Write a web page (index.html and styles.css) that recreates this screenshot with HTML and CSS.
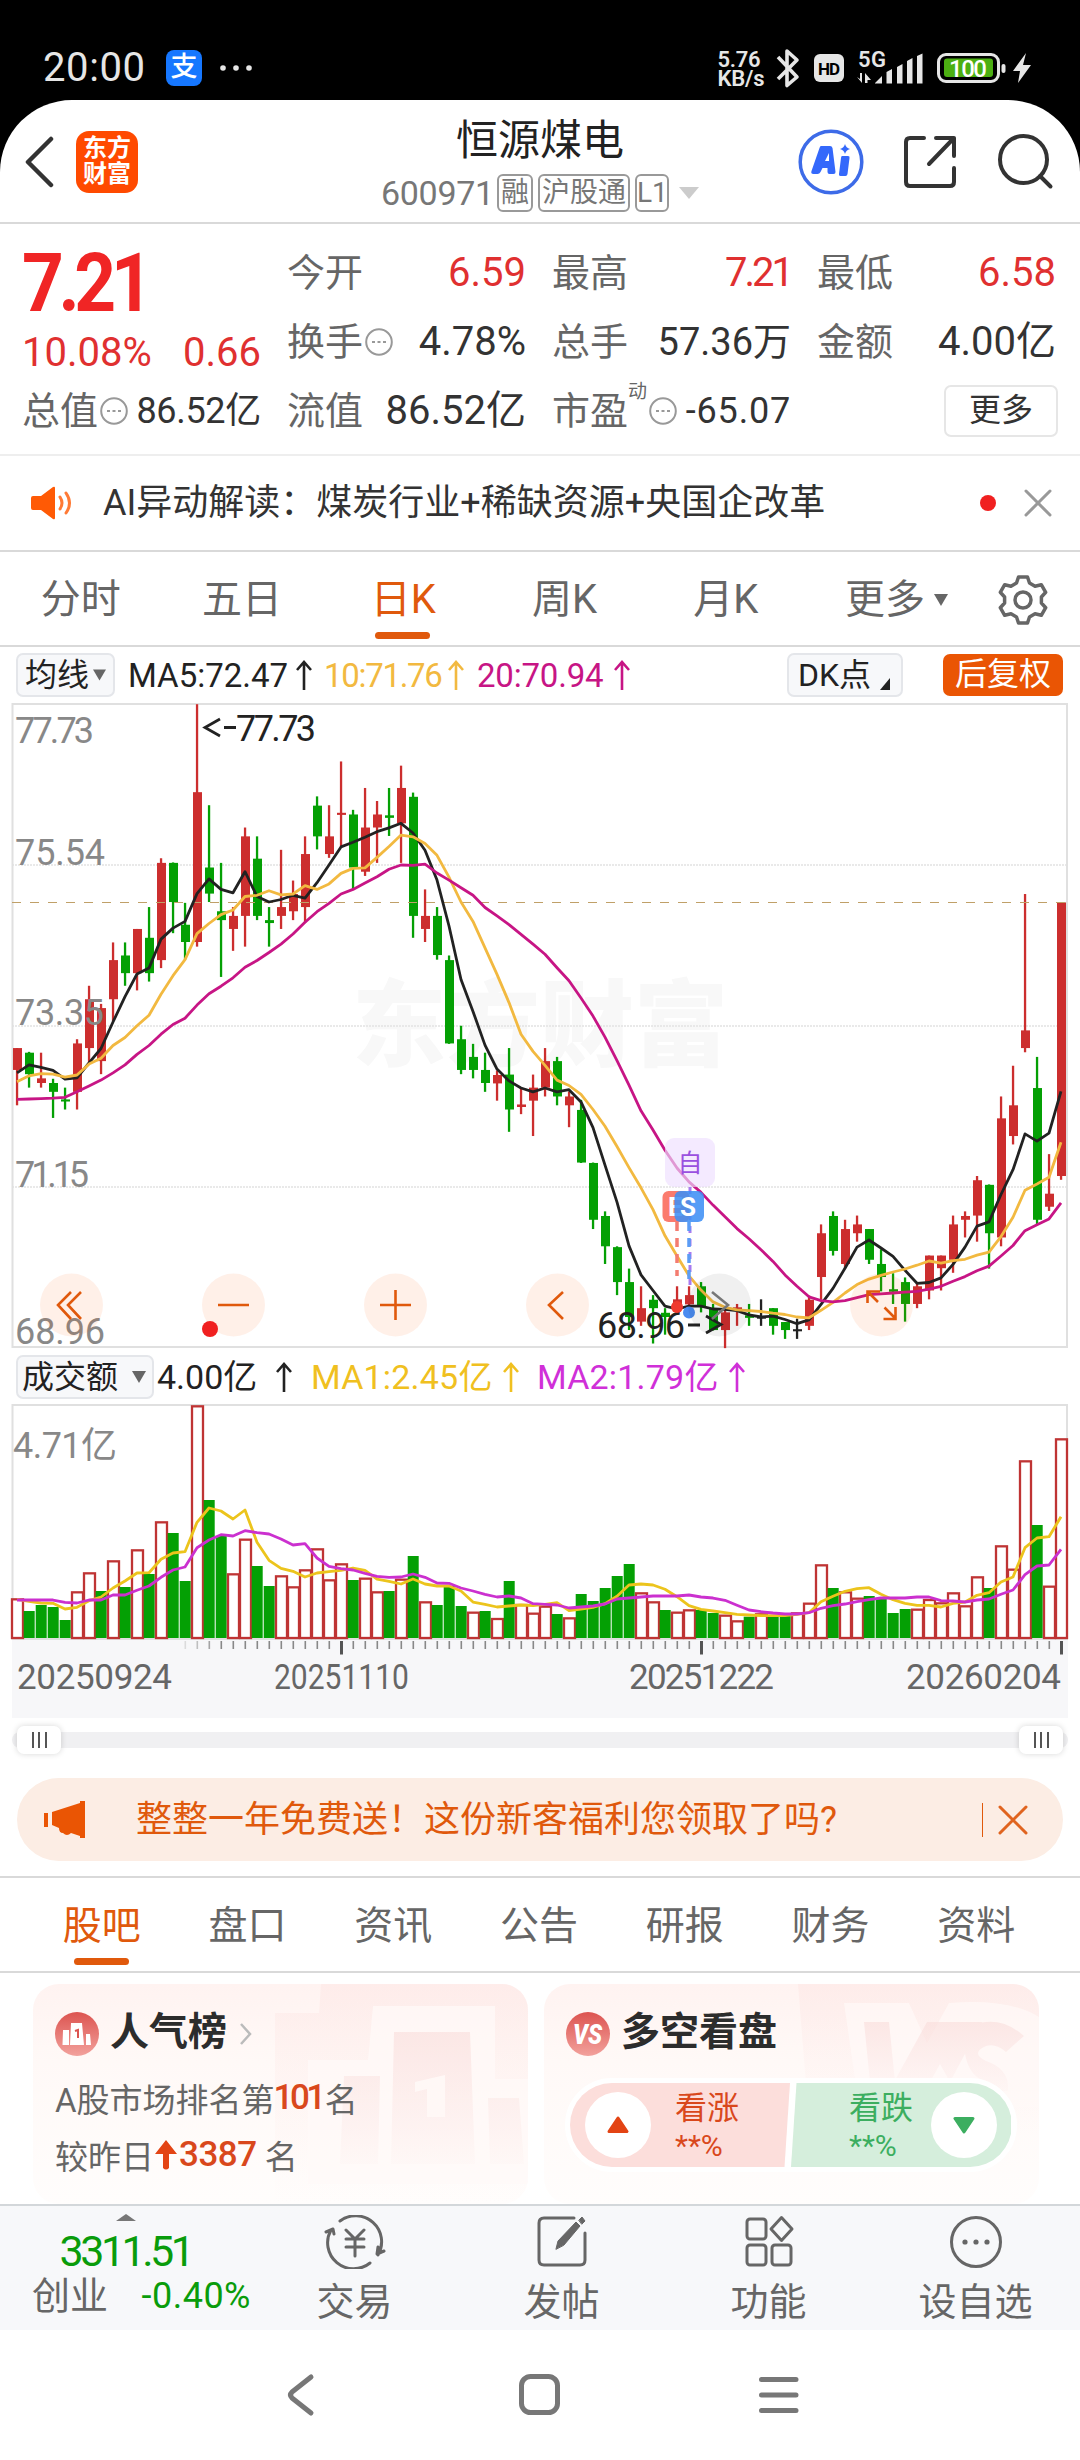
FILE: index.html
```html
<!DOCTYPE html>
<html lang="zh-CN">
<head>
<meta charset="utf-8">
<title>恒源煤电 600971</title>
<link rel="stylesheet" href="styles.css">
</head>
<body>
<div class="status">
  <span class="clock">20:00</span>
  <span class="alipay">支</span>
  <svg class="more-dots" width="32" height="8" viewBox="0 0 32 8" fill="#e6e6e6"><circle cx="3" cy="4" r="2.8"/><circle cx="16" cy="4" r="2.8"/><circle cx="29" cy="4" r="2.8"/></svg>
  <svg class="status-icons" width="330" height="60" viewBox="710 40 330 60" fill="#e6e6e6">
    <g class="net-speed"><text x="717.500" y="67" textLength="43">5.76</text><text x="717.500" y="86" textLength="47">KB/s</text></g>
    <path d="M778 57L797 77L787 85.500V51L797 60L778 79" fill="none" stroke="#e6e6e6" stroke-width="3.600" stroke-linejoin="round"/>
    <rect x="814" y="54" width="30" height="28" rx="6"/>
    <text x="818" y="74.500" class="hd" textLength="22">HD</text>
    <text x="858" y="66.500" class="fiveg" textLength="28">5G</text>
    <path d="M857 77l5 6V73h-2v6zM865 83V73l6 7h-3.500v3z"/>
    <path d="M875 83l7-7v7.500h-7zM886.500 72l5.500-3v14.500h-5.500zM897 67l5.500-3v19.500H897zM907 61l5.500-3v25.500H907zM917 56l5.500-2.500v30H917z"/>
    <rect x="938.500" y="54.500" width="60" height="27" rx="7.500" fill="none" stroke="#e6e6e6" stroke-width="3"/>
    <rect x="944" y="58.500" width="49" height="18.500" rx="3" fill="#4caf12"/>
    <text x="949" y="76.500" class="batt" textLength="38">100</text>
    <rect x="1001.500" y="64" width="4" height="9" rx="2"/>
    <path d="M1026 53l-13 18h7l-2 12l13-18h-8z"/>
  </svg>
</div>

<main class="sheet">
  <header class="header">
    <svg class="back" width="30" height="52" viewBox="0 0 30 52" fill="none" stroke="#333" stroke-width="4.500" stroke-linejoin="round" stroke-linecap="round"><path d="M27 3L4 26L27 49"/></svg>
    <span class="logo">东方<br>财富</span>
    <div class="title">
      <h1>恒源煤电</h1>
      <div class="code"><span class="num">600971</span><i>融</i><i>沪股通</i><i>L1</i><svg width="20" height="12" viewBox="0 0 20 12"><path d="M0 0h20L10 12z" fill="#ccc"/></svg></div>
    </div>
    <svg class="actions" width="260" height="70" viewBox="796 127 260 70" fill="none" stroke="#333" stroke-width="4" stroke-linecap="round" stroke-linejoin="round">
      <circle cx="831" cy="162" r="30.800" stroke="#3d6be8" stroke-width="3.500"/>
      <g stroke="none" fill="#3468fb"><path fill-rule="evenodd" d="M820 146h10q2 0 2.500 2l3 24q.2 2-2 2h-4q-2 0-2-2v-4h-5l-2 4q-1 2-3 2h-4q-3 0-2-3l8-23q.5-2 1.500-2zM825 161h4v-8z"/><path d="M842 156h6q2 0 1.500 2l-2 16q-.3 2-2 2h-5q-2 0-1.500-2l2-16q.2-2 1-2zM845 144q1 4 5 5q-4 1-5 5q-1-4-5-5q4-1 5-5z"/></g>
      <path d="M924 138h-14q-4 0-4 4v40q0 4 4 4h40q4 0 4-4v-14M936 138h18v18M954 138l-25 26"/>
      <circle cx="1023.500" cy="159.500" r="23.500"/><path d="M1040 176l10.500 10.500"/>
    </svg>
  </header>

  <section class="quote">
    <div class="price"><strong>7.21</strong><div class="change"><span>10.08%</span><span>0.66</span></div></div>
    <div class="cell"><label>今开</label><b class="red">6.59</b></div>
    <div class="cell"><label>最高</label><b class="red high">7.21</b></div>
    <div class="cell"><label>最低</label><b class="red">6.58</b></div>
    <div class="cell"><label>换手<svg class="info" viewBox="0 0 28 28"><circle cx="14" cy="14" r="12.800"/><path d="M7 14h3M12.500 14h3M18 14h3"/></svg></label><b>4.78%</b></div>
    <div class="cell"><label>总手</label><b class="tight">57.36万</b></div>
    <div class="cell"><label>金额</label><b>4.00亿</b></div>
    <div class="cell"><label>总值<svg class="info" viewBox="0 0 28 28"><circle cx="14" cy="14" r="12.800"/><path d="M7 14h3M12.500 14h3M18 14h3"/></svg></label><b class="small">86.52亿</b></div>
    <div class="cell"><label>流值</label><b>86.52亿</b></div>
    <div class="cell"><label>市盈<sup>动</sup><svg class="info" viewBox="0 0 28 28"><circle cx="14" cy="14" r="12.800"/><path d="M7 14h3M12.500 14h3M18 14h3"/></svg></label><b class="small wide">-65.07</b></div>
    <div class="cell end"><span class="more-btn">更多</span></div>
  </section>

  <section class="news">
    <svg width="42" height="34" viewBox="0 0 42 34"><path d="M2 10h8L22 1q2-1 2 1v30q0 2-2 1L10 24H2q-2 0-2-2V12q0-2 2-2z" fill="#ff5a05"/><path d="M29 11q4 6 0 12M35 7q7 10 0 20" fill="none" stroke="#ff7a35" stroke-width="3" stroke-linecap="round"/></svg>
    <p>AI异动解读：煤炭行业+稀缺资源+央国企改革</p>
    <span class="dot"></span>
    <svg width="28" height="28" viewBox="0 0 28 28"><path d="M2 2l24 24M26 2L2 26" stroke="#999" stroke-width="3" stroke-linecap="round"/></svg>
  </section>

  <nav class="periods">
    <span>分时</span><span>五日</span><span class="on">日K</span><span>周K</span><span>月K</span>
    <span class="drop">更多<svg width="14" height="12" viewBox="0 0 14 12"><path d="M0 0h14L7 12z" fill="#666"/></svg></span>
    <svg class="gear" width="50" height="52" viewBox="-25 -26 50 52" fill="none" stroke="#666" stroke-width="3.500" stroke-linejoin="round"><circle r="8"/><path d="M-4.500-23h9l2 6l5.500 3.200l6.300-1.500l4.400 7.600l-4.300 4.700v6l4.300 4.700l-4.400 7.600l-6.300-1.500l-5.500 3.200l-2 6h-9l-2-6l-5.500-3.200l-6.300 1.500l-4.400-7.600l4.300-4.700v-6l-4.300-4.700l4.400-7.600l6.300 1.500l5.500-3.200z"/></svg>
  </nav>

  <div class="legend">
    <span class="select avg">均线<svg width="13" height="12" viewBox="0 0 14 12"><path d="M0 0h14L7 12z" fill="#666"/></svg></span>
    <span class="ma ma5">MA5:72.47</span><svg class="up c5" viewBox="0 0 16 30"><path d="M8 30V2M1 10L8 2L15 10"/></svg>
    <span class="ma ma10">10:71.76</span><svg class="up c10" viewBox="0 0 16 30"><path d="M8 30V2M1 10L8 2L15 10"/></svg>
    <span class="ma ma20">20:70.94</span><svg class="up c20" viewBox="0 0 16 30"><path d="M8 30V2M1 10L8 2L15 10"/></svg>
    <span class="select dk">DK点<svg width="10" height="12" viewBox="0 0 10 12"><path d="M10 0v12H0z" fill="#222"/></svg></span>
    <span class="adjust">后复权</span>
  </div>

  <svg class="chart" width="1080" height="647" viewBox="0 703 1080 647">
    <text x="352" y="1059" class="watermark" textLength="376">东方财富</text>
    <g class="grid"><path d="M12 865H1067M12 1026H1067M12 1187H1067"/></g>
    <rect x="12.500" y="704" width="1054.500" height="643" fill="none" stroke="#e0e0e0" stroke-width="2"/>
    <g id="candles"></g>
    <path d="M12 902.500H1067" stroke="#c0a068" stroke-width="1.200" stroke-dasharray="9 9"/>
    <g id="averages"></g>
    <g class="axis">
      <text x="15" y="743" textLength="79">77.73</text><text x="15" y="865" textLength="90">75.54</text>
      <text x="15" y="1025" textLength="89">73.35</text><text x="15" y="1187" textLength="74">71.15</text>
      <text x="15" y="1344" textLength="90">68.96</text>
    </g>
    <g class="extreme">
      <path d="M220 719L205 727.500L220 736M224 727.500h12M706 1316L721 1324.500L706 1333M688 1325h12" fill="none" stroke="#222" stroke-width="2.800"/>
      <text x="236" y="741" textLength="80">77.73</text><text x="597" y="1338" textLength="88">68.96</text>
    </g>
    <g class="trades">
      <path d="M677 1222V1276" stroke="#f47c70" stroke-width="3.500" stroke-dasharray="9 7"/>
      <path d="M690 1187V1290" stroke="#a77af0" stroke-width="3" stroke-dasharray="7 6"/>
      <path d="M689 1222V1286" stroke="#5b9cf5" stroke-width="3.500" stroke-dasharray="9 7"/>
      <rect x="665" y="1138" width="50" height="49" rx="9" fill="#eedfff" opacity=".65"/>
      <text x="690" y="1172" class="self">自</text>
      <rect x="662.500" y="1191" width="27" height="31" rx="6" fill="#fb7466" opacity=".95"/>
      <text x="668" y="1216" class="mark">E</text>
      <rect x="674.500" y="1191" width="29.500" height="31" rx="6" fill="#3f8ff5" opacity=".88"/>
      <text x="680" y="1216" class="mark">S</text>
      <circle cx="677" cy="1307" r="6" fill="#ef3a30"/><circle cx="689" cy="1312.500" r="6" fill="#4a8bf0"/>
    </g>
    <g class="controls">
      <circle cx="71.500" cy="1305" r="31.500"/><circle cx="233.500" cy="1305" r="31.500"/><circle cx="395.500" cy="1305" r="31.500"/><circle cx="557.500" cy="1305" r="31.500"/><circle cx="719.500" cy="1305" r="31.500" class="off"/><circle cx="881.500" cy="1305" r="31.500"/>
      <path d="M71 1292L58 1305L71 1319M81 1292L68 1305L81 1319M218 1305H249M380 1305H411M395.500 1290V1320M563 1292L549 1305L563 1319"/>
      <path class="off-mark" d="M712 1292L728 1305L712 1319"/>
      <path d="M878 1302L868 1292M867.500 1303V1291.500H880M884.500 1307.500L895 1318M895.500 1307V1319H883.500"/>
    </g>
    <circle cx="210" cy="1329" r="8" fill="#f02020"/>
  </svg>

  <div class="legend vol">
    <span class="select amount">成交额<svg width="14" height="12" viewBox="0 0 14 12"><path d="M0 0h14L7 12z" fill="#666"/></svg></span>
    <span class="ma v0">4.00亿</span><svg class="up c5" viewBox="0 0 16 30"><path d="M8 30V2M1 10L8 2L15 10"/></svg>
    <span class="ma v1">MA1:2.45亿</span><svg class="up cv1" viewBox="0 0 16 30"><path d="M8 30V2M1 10L8 2L15 10"/></svg>
    <span class="ma v2">MA2:1.79亿</span><svg class="up cv2" viewBox="0 0 16 30"><path d="M8 30V2M1 10L8 2L15 10"/></svg>
  </div>

  <svg class="chart" width="1080" height="314" viewBox="0 1404 1080 314">
    <rect x="12" y="1640" width="1056" height="78" fill="#f7f7f9"/>
    <rect x="12.500" y="1405" width="1054.500" height="234" fill="none" stroke="#e0e0e0" stroke-width="2"/>
    <g class="axis"><text x="13" y="1458" textLength="104">4.71亿</text></g>
    <g id="volumes"></g>
    <g class="dates"><text x="17" y="1689" textLength="155">20250924</text><text x="274" y="1689" textLength="135" lengthAdjust="spacingAndGlyphs">20251110</text><text x="629" y="1689" textLength="145">20251222</text><text x="906" y="1689" textLength="155">20260204</text></g>
  </svg>

  <div class="slider"><span><i></i><i></i><i></i></span><span><i></i><i></i><i></i></span></div>

  <section class="promo">
    <svg width="44" height="38" viewBox="0 0 44 38" fill="#ea5504"><path d="M1 12h4v14H1zM9 11L37 2V0h5v37h-5v-2L28 32q-4 4-8 0q-4 0-4-5l-7-3z"/></svg>
    <p>整整一年免费送！这份新客福利您领取了吗?</p>
    <i></i>
    <svg width="30" height="30" viewBox="0 0 30 30"><path d="M2 2l26 26M28 2L2 28" stroke="#e0641f" stroke-width="3" stroke-linecap="round"/></svg>
  </section>

  <nav class="sections"><span class="on">股吧</span><span>盘口</span><span>资讯</span><span>公告</span><span>研报</span><span>财务</span><span>资料</span></nav>

  <section class="cards">
    <article class="card">
      <svg class="art" width="495" height="220" viewBox="0 0 495 220">
        <defs><linearGradient id="fade" x1="0" y1="0" x2="0" y2="1"><stop offset="0" stop-color="#f9dcda" stop-opacity=".6"/><stop offset="1" stop-color="#f9dcda" stop-opacity=".08"/></linearGradient>
        <linearGradient id="panel" x1="0" y1="0" x2="0" y2="1"><stop offset="0" stop-color="#fce0de" stop-opacity=".36"/><stop offset="1" stop-color="#fce4e1" stop-opacity="0"/></linearGradient>
        <linearGradient id="badge" x1="0" y1="0" x2="0" y2="1"><stop offset="0" stop-color="#dc5450"/><stop offset="1" stop-color="#f2a19c"/></linearGradient></defs>
        <path d="M288 0H495V220H242V29H286z" fill="url(#panel)"/>
        <path d="M340 22H462V95H495V200H275V76H335z" fill="#fffaf8" opacity=".75"/>
        <path d="M361 48h76l5 132h-84zM311 92h36l-2 88h-38zM455 114h31l5 66h-34z" fill="url(#fade)"/>
        <path d="M382 98l30-7v42h-18v-28l-12 3z" fill="#fff8f6"/>
      </svg>
      <h2><svg width="44" height="44" viewBox="0 0 44 44"><circle cx="22" cy="22" r="22" fill="url(#badge)"/><path d="M8 18h6v15H7.500zM16 11h11l2 22H15zM31 22h4l1 11h-5z" fill="#fff"/><path d="M20 19l3-1v8" fill="none" stroke="#dc5450" stroke-width="2"/></svg><span>人气榜</span><svg width="13" height="22" viewBox="0 0 13 22"><path d="M2 1L11 11L2 21" fill="none" stroke="#bbb" stroke-width="2.500"/></svg></h2>
      <p>A股市场排名第<b class="rank">101</b>名</p>
      <p>较昨日<svg width="24" height="30" viewBox="0 0 24 30"><path d="M12 0L23 14H15V28q-3 3-6 0V14H1z" fill="#e34414"/></svg><b class="rise">3387</b> 名</p>
    </article>
    <article class="card">
      <svg class="art" width="495" height="220" viewBox="0 0 495 220">
        <path d="M254 0H495V150H266z" fill="url(#panel)"/>
        <path d="M300 19h65l18 40L405 19q60-5 90 14v90H315z" fill="#fffaf8" opacity=".7"/>
        <path d="M320 38h25l6 60h-25zM350 98L383 38h55l-32 60l-10-18l-10 18zM420 62q-5-22 22-24q20-2 38 14l-18 16q-10-9-20-6q-16 7 0 15q24 8 22 30h-16q0-8-12-12q-14-8-16-33z" fill="url(#fade)"/>
      </svg>
      <h2><svg width="44" height="44" viewBox="0 0 44 44"><circle cx="22" cy="22" r="22" fill="url(#badge)"/><text x="7" y="32" class="vs" textLength="29" lengthAdjust="spacingAndGlyphs">VS</text></svg><span>多空看盘</span></h2>
      <div class="vote">
        <div class="bull"><span class="knob"><svg width="22" height="18" viewBox="0 0 22 18"><path d="M11 2L20 15.500H2z" fill="#e34414" stroke="#e34414" stroke-width="3" stroke-linejoin="round"/></svg></span><div>看涨<small>**%</small></div></div>
        <div class="bear"><div>看跌<small>**%</small></div><span class="knob"><svg width="22" height="18" viewBox="0 0 22 18"><path d="M2 2.500H20L11 16z" fill="#3cae60" stroke="#3cae60" stroke-width="3" stroke-linejoin="round"/></svg></span></div>
      </div>
    </article>
  </section>

  <footer class="toolbar">
    <div class="index"><svg width="20" height="7" viewBox="0 0 20 7"><path d="M10 0L20 7H0z" fill="#777"/></svg><strong>3311.51</strong><div><span>创业</span><em>-0.40%</em></div></div>
    <div class="tool"><svg width="62" height="54" viewBox="-31 -27 62 54" fill="none" stroke="#666" stroke-width="3" stroke-linecap="round" stroke-linejoin="round"><path d="M-15-21A26 26 0 0 1 23 13M15 21A26 26 0 0 1-24-12M-29-10l7-3l1 5M29 9l-7 3l1-7M-9-12L0-3L9-12M0-3V14M-9-3H9M-9 5H9"/></svg>交易</div>
    <div class="tool"><svg width="62" height="54" viewBox="-31 -27 62 54" fill="none" stroke="#666" stroke-width="3" stroke-linecap="round"><path d="M12-24H-18q-5 0-5 5V18q0 5 5 5H18q5 0 5-5V-9"/><path d="M-6 7L-4-1L14-20L18-16L2 3zM17-22L20-25L23-21L20-18z" fill="#666" stroke-width="1"/></svg>发帖</div>
    <div class="tool"><svg width="62" height="54" viewBox="-31 -27 62 54" fill="none" stroke="#666" stroke-width="3" stroke-linejoin="round"><rect x="-22" y="-23" width="19" height="20" rx="3"/><rect x="-22" y="3" width="19" height="20" rx="3"/><rect x="3" y="3" width="19" height="20" rx="3"/><path d="M12.500-24.500L23-13L12.500-1.500L2-13z"/></svg>功能</div>
    <div class="tool"><svg width="62" height="54" viewBox="-31 -27 62 54"><circle r="24.500" fill="none" stroke="#666" stroke-width="3"/><g fill="#666"><circle cx="-11" r="2.600"/><circle r="2.600"/><circle cx="11" r="2.600"/></g></svg>设自选</div>
  </footer>

  <div class="sysnav">
    <svg width="520" height="50" viewBox="284 2370 520 50" fill="none" stroke="#777" stroke-width="5" stroke-linecap="round" stroke-linejoin="round"><path d="M311 2377L292 2392Q289 2395 292 2398L311 2413"/><rect x="521.500" y="2376.500" width="36" height="36" rx="9"/><path d="M761.500 2379.500H796M761.500 2395H796M761.500 2410.500H796"/></svg>
  </div>
</main>
<script src="chart.js"></script>
</body>
</html>
```

FILE: styles.css
```css
* { box-sizing: border-box; }
body { margin: 0; width: 1080px; background: #000; font-family: Roboto, "Noto Sans CJK SC", sans-serif; color: #333; }
svg { display: block; flex: none; }
h1, h2, p { margin: 0; font-weight: 400; }
i, em { font-style: normal; }

.status { height: 100px; padding: 0 40px 0 43px; display: flex; align-items: center; color: #e6e6e6; }
.clock { font-size: 40px; line-height: 40px; width: 123px; align-self: flex-end; margin-bottom: 12px; letter-spacing: .6px; }
.alipay { width: 36px; height: 36px; margin: 36px 18px 0 0; background: #1677ff; border-radius: 8px; color: #fff; font-size: 27px; line-height: 34px; text-align: center; font-weight: 500; }
.more-dots { margin-top: 36px; }
.status-icons { margin-left: auto; margin-top: 40px; }
.net-speed { font-size: 22px; font-weight: 600; }
.hd { font-size: 17px; font-weight: 700; fill: #000; }
.fiveg { font-size: 22px; font-weight: 600; }
.batt { font-size: 24px; font-weight: 500; fill: #fff; }

.sheet { background: #fff; border-radius: 72px 72px 0 0; height: 2360px; }

.header { height: 124px; border-bottom: 2px solid #d9d9d9; display: grid; grid-template-columns: 52px 100px 1fr 284px; align-items: center; padding: 2px 0 0 24px; }
.logo { width: 62px; height: 62px; border-radius: 13px; background: #ff4a00; color: #fff; font-size: 24px; font-weight: 700; line-height: 26px; text-align: center; padding-top: 4px; }
.title { width: 400px; justify-self: center; margin-left: 108px; margin-top: 4px; text-align: center; }
.title h1 { font-size: 42px; line-height: 50px; color: #222; }
.code { display: flex; align-items: center; justify-content: center; height: 38px; margin-top: 8px; font-size: 34px; color: #777; }
.code .num { width: 116px; letter-spacing: -.3px; text-align: left; }
.code i { border: 2px solid #999; border-radius: 6px; height: 38px; line-height: 33px; font-size: 28px; padding: 0 2px; margin-right: 5px; }
.code i:nth-child(4) { width: 34px; padding: 0; }
.code svg { margin-left: 5px; }
.actions { justify-self: start; }

.quote { height: 232px; padding: 14px 25px 0 22px; border-bottom: 2px solid #eee; display: grid; grid-template-columns: repeat(4, 239px); grid-template-rows: repeat(3, 69px); column-gap: 26px; }
.price { grid-row: 1 / 3; color: #f02525; }
.price strong { display: block; font-size: 82px; line-height: 80px; margin-top: 5px; font-weight: 700; letter-spacing: -6px; transform: scaleX(.89); transform-origin: left; }
.change { display: flex; justify-content: space-between; font-size: 40px; line-height: 50px; margin-top: 5px; color: #e03030; }
.cell { display: flex; justify-content: space-between; align-items: center; }
.cell.end { justify-content: flex-end; margin-right: -2px; }
.cell label { font-size: 38px; line-height: 60px; color: #666; display: flex; align-items: center; white-space: nowrap; }
.cell b { font-weight: 400; font-size: 40px; line-height: 60px; white-space: nowrap; }
.cell b.tight { font-size: 38px; }
.cell b.small { font-size: 36px; letter-spacing: -.3px; }
.cell b.wide { letter-spacing: .8px; }
.cell b.high { letter-spacing: -3px; }
.cell b.red { color: #e03030; }
.cell sup { font-size: 19px; line-height: 20px; align-self: flex-start; margin-top: 1px; }
.info { width: 28px; height: 28px; margin-left: 2px; fill: none; stroke: #999; stroke-width: 2; }
.more-btn { width: 114px; height: 52px; border: 2px solid #e6e6e6; border-radius: 7px; text-align: center; font-size: 32px; line-height: 47px; }

.news { height: 96px; border-bottom: 2px solid #d9d9d9; display: flex; align-items: center; padding: 0 28px 0 31px; }
.news p { font-size: 36px; line-height: 50px; margin-left: 30px; flex: 1; }
.news .dot { width: 16px; height: 16px; border-radius: 50%; background: #f02020; margin-right: 28px; }

.periods { height: 95px; border-bottom: 2px solid #d9d9d9; display: grid; grid-template-columns: repeat(5, 161.300px) 180px 1fr; align-items: center; color: #666; font-size: 40px; text-align: center; padding-top: 2px; }
.periods span, .sections span { position: relative; line-height: 60px; }
.periods .drop { display: flex; align-items: center; justify-content: center; gap: 9px; }
.gear { margin-left: 12px; }
.on { color: #e0590c; }
.on::after { content: ""; position: absolute; left: 50%; bottom: -9px; width: 55px; height: 7px; margin-left: -28px; border-radius: 4px; background: #e0590c; }

.legend { height: 56px; display: flex; align-items: center; padding: 0 17px 0 16px; font-size: 33px; line-height: 43px; color: #222; white-space: nowrap; }
.legend.vol { height: 54px; font-size: 34px; }
.select { height: 44px; border: 2px solid #e4e6ea; border-radius: 7px; background: #f7f8fa; display: flex; align-items: center; font-size: 32px; }
.avg { width: 99px; padding-left: 7px; gap: 4px; margin-right: 13px; }
.amount { width: 138px; padding-left: 4px; gap: 14px; margin-right: 3px; }
.up { width: 16px; height: 32px; fill: none; stroke: currentColor; stroke-width: 2.600; margin-left: 2px; }
.ma { flex: none; }
.ma5 { width: 166px; }
.ma10 { width: 122px; margin-left: 12px; color: #f2b940; letter-spacing: -1.300px; }
.ma20 { width: 135px; margin-left: 13px; color: #c71585; letter-spacing: -.2px; }
.c10 { color: #f2b940; } .c20 { color: #c71585; }
.v0 { width: 117px; }
.v1 { width: 190px; margin-left: 19px; color: #f0c020; letter-spacing: .2px; }
.v2 { width: 190px; margin-left: 18px; color: #d030d8; letter-spacing: .2px; }
.cv1 { color: #f0c020; } .cv2 { color: #d030d8; }
.dk { width: 116px; padding-left: 9px; gap: 8px; margin-left: auto; margin-right: 40px; }
.dk svg { margin-top: 18px; margin-left: 1px; }
.adjust { width: 120px; height: 42px; border-radius: 7px; background: #ea5504; color: #fff; font-size: 32px; line-height: 40px; text-align: center; }

.watermark { font-size: 94px; font-weight: 900; fill: #f8f8f8; }
.grid path { stroke: #e2e2e2; stroke-width: 1.500; stroke-dasharray: 2 1; }
.axis { font-size: 36px; fill: #888; }
.extreme { font-size: 36px; fill: #222; }
.dates { font-size: 35px; fill: #666; }
.self { font-size: 25px; fill: #9a50e0; text-anchor: middle; }
.mark { font-size: 26px; font-weight: 700; fill: #fff; }
.controls circle { fill: #ff5a00; fill-opacity: .09; }
.controls .off { fill: #000; fill-opacity: .06; }
.controls path { fill: none; stroke: #e0590c; stroke-width: 2.600; }
.controls .off-mark { stroke: #777; }

.slider { margin: 14px 12px 0; height: 16px; border-radius: 8px; background: #f0f0f2; display: flex; justify-content: space-between; align-items: center; padding: 0 5px; }
.slider span { width: 44px; height: 28px; border-radius: 7px; background: #fff; box-shadow: 0 0 6px rgba(0,0,0,.16); display: flex; align-items: center; justify-content: center; gap: 4.500px; }
.slider i { width: 2px; height: 16px; background: #555; }

.promo { margin: 30px 17px 15px; height: 83px; border-radius: 42px; background: #fcede4; display: flex; align-items: center; padding: 0 35px 0 26px; color: #e0590c; }
.promo p { flex: 1; margin-left: 49px; font-size: 36px; line-height: 50px; }
.promo i { width: 1px; height: 34px; background: #e0590c; margin-right: 15px; }

.sections { height: 97px; border: solid #d9d9d9; border-width: 2px 0; padding: 2px 31px 0 29px; display: grid; grid-template-columns: repeat(7, 1fr); align-items: center; font-size: 39px; color: #666; text-align: center; }

.cards { display: flex; gap: 16px; padding: 11px 33px 0; height: 231px; }
.card { position: relative; width: 495px; height: 220px; border-radius: 26px; overflow: hidden; background: linear-gradient(#fff3f1, #fff9f7 35%, #fffdfc); padding: 0 22px; color: #666; font-size: 33px; }
.art { position: absolute; left: 0; top: 0; }
.card > :not(.art) { position: relative; }
.card h2 { display: flex; align-items: center; gap: 12px; height: 44px; margin-top: 28px; font-size: 39px; font-weight: 700; color: #2c2c2c; }
.card h2 span { line-height: 44px; padding-bottom: 4px; margin-left: -1px; }
.card p { display: flex; align-items: center; height: 57px; white-space: pre; }
.card h2 + p { margin-top: 13px; }
.card p b { font-weight: 500; font-size: 35px; color: #d9481c; }
.card p svg { margin: 0 1px 0 0; }
.rank { letter-spacing: -3.500px; padding-right: 2px; margin-left: -1px; }
.rise { letter-spacing: -.5px; }
.vs { font-size: 28px; font-weight: 900; font-style: italic; fill: #fff; }
.vote { display: flex; width: 452px; height: 94px; margin-top: 22px; margin-left: -1px; border: 5px solid #fff; border-radius: 47px; background: #fff; overflow: hidden; line-height: 42px; font-size: 32px; }
.vote > div { display: flex; align-items: center; height: 84px; width: 220px; }
.vote small { display: block; font-size: 30px; line-height: 36px; margin-top: -1px; }
.bull { background: #fcdedb; color: #d9481c; clip-path: polygon(0 0, 100% 0, 97.500% 100%, 0 100%); padding-left: 15px; gap: 24px; }
.bear { background: #d5eedc; color: #3cae60; clip-path: polygon(2.500% 0, 100% 0, 100% 100%, 0 100%); margin-left: 1px; padding-left: 58px; gap: 18px; }
.knob { width: 66px; height: 66px; border-radius: 50%; background: #fff; flex: none; display: flex; align-items: center; justify-content: center; }

.toolbar { height: 126px; border-top: 2px solid #d3d7da; background: #f7f8fa; display: grid; grid-template-columns: 251px repeat(4, 207px); color: #666; }
.index { display: flex; flex-direction: column; align-items: center; padding-top: 8px; }
.index strong { font-weight: 400; color: #099c0b; font-size: 43px; line-height: 44px; margin-top: 8px; letter-spacing: -3.500px; }
.index div { display: flex; justify-content: space-between; align-items: center; align-self: stretch; margin-left: 32px; font-size: 38px; line-height: 40px; margin-top: 3px; }
.index em { color: #099c0b; font-size: 36px; letter-spacing: .5px; }
.tool { display: flex; flex-direction: column; align-items: center; font-size: 38px; line-height: 44px; padding-top: 9px; gap: 11px; }
.sysnav { padding: 40px 0 0 284px; }
```

FILE: chart.js
```js
const NS = 'http://www.w3.org/2000/svg';
const COLORS = { r: '#cc2e2e', g: '#04a004', k: '#222' };
const xAt = i => 17 + 12 * i;
const priceY = v => 700 + v / 2.376;
const volumeY = v => 1350 + v / 3;

function add(parent, tag, attrs) {
  const el = document.createElementNS(NS, tag);
  for (const key in attrs) el.setAttribute(key, attrs[key]);
  parent.appendChild(el);
}

function line(parent, values, toY, color, width) {
  const points = values.map((v, i) => xAt(i) + ',' + toY(v).toFixed(1)).join(' ');
  add(parent, 'polyline', { points, fill: 'none', stroke: color, 'stroke-width': width, 'stroke-linejoin': 'round' });
}

// direction, high, body top, body bottom, low
const candles = `r 827 827 879 963;g 836 838 889 921;r 838 899 910 921;g 900 910 931 993;g 921 949 954 973;r 806 816 931 973;r 679 711 827 860;r 722 732 858 889;r 576 618 711 763;g 576 607 649 679;r 544 544 649 690;g 492 565 649 669;r 376 387 618 637;g 386 387 480 554;g 482 534 575 617;r 10 219 575 586;g 250 398 460 480;g 387 502 523 658;r 492 513 544 596;r 303 324 513 586;g 324 377 513 523;g 492 523 530 586;r 356 492 513 544;r 429 461 502 523;r 324 366 492 530;g 229 251 324 355;r 250 324 366 375;r 146 268 273 350;g 261 272 398 450;r 209 303 408 418;r 240 272 303 387;g 209 274 280 323;r 156 209 293 387;g 220 230 513 565;r 450 513 544 575;g 492 513 606 617;g 607 618 816 817;g 774 806 879 889;g 817 848 879 899;g 838 879 910 931;r 880 891 911 952;g 827 890 973 1026;r 921 961 967 984;r 890 921 952 1036;r 827 858 921 942;g 848 858 942 963;r 930 942 963 1015;g 950 974 1099 1100;g 1099 1100 1235 1257;g 1215 1226 1298 1340;g 1298 1300 1383 1414;g 1351 1383 1466 1497;r 1393 1445 1477 1487;g 1414 1425 1445 1529;g 1445 1456 1466 1508;r 1393 1424 1450 1455;r 1393 1414 1436 1440;g 1383 1393 1440 1455;g 1435 1445 1497 1498;r 1445 1455 1497 1540;r 1435 1443 1447 1487;g 1435 1462 1468 1487;k 1424 1464 1470 1487;g 1445 1445 1487 1508;g 1478 1478 1497 1518;k 1470 1495 1500 1518;r 1415 1425 1487 1497;r 1246 1267 1371 1425;g 1215 1226 1309 1320;r 1235 1257 1340 1350;r 1225 1246 1267 1287;g 1257 1257 1330 1340;g 1305 1340 1371 1405;g 1362 1400 1406 1435;g 1372 1383 1435 1477;r 1385 1393 1435 1445;r 1320 1320 1403 1424;r 1320 1320 1350 1403;r 1225 1246 1330 1361;r 1215 1226 1235 1277;r 1131 1141 1225 1287;g 1151 1152 1267 1351;r 942 994 1277 1298;r 869 963 1036 1056;r 461 785 827 837;g 848 922 1235 1245;r 1079 1173 1204 1214;r 481 481 1131 1140`.split(';').map(row => row.split(' '));

const ma5 = [886,867,873,880,901,898,862,828,765,705,651,637,568,542,526,460,425,450,458,408,467,480,474,464,471,434,392,349,338,326,313,304,293,316,357,428,537,664,740,820,877,905,922,931,922,931,926,955,1016,1105,1193,1297,1366,1403,1440,1447,1440,1440,1447,1448,1451,1461,1466,1464,1472,1482,1473,1436,1398,1350,1300,1283,1302,1322,1355,1386,1384,1373,1341,1300,1250,1240,1175,1116,1031,1048,1029,930];
const ma10 = [907,893,888,889,896,891,865,851,821,802,774,749,699,655,617,555,531,510,499,467,464,453,463,461,441,450,437,412,400,399,374,348,321,325,341,369,421,480,526,589,652,719,794,835,868,903,916,937,973,1013,1061,1111,1159,1211,1273,1321,1368,1402,1430,1443,1449,1451,1453,1457,1460,1466,1468,1450,1431,1409,1389,1376,1367,1359,1352,1343,1333,1338,1332,1329,1319,1312,1275,1229,1165,1150,1134,1051];
const ma20 = [949,948,947,946,944,931,917,903,886,867,842,821,794,771,756,725,698,680,660,635,619,600,580,556,528,503,483,461,450,435,420,402,392,393,390,411,428,446,464,493,513,534,557,580,604,636,667,708,751,801,857,915,976,1022,1070,1112,1145,1170,1200,1228,1256,1280,1306,1334,1366,1393,1418,1427,1430,1427,1420,1413,1411,1409,1407,1405,1400,1393,1381,1370,1356,1345,1321,1296,1261,1247,1233,1195];

const candleLayer = document.getElementById('candles');
candles.forEach(([kind, high, top, bottom, low], i) => {
  const x = xAt(i);
  const color = COLORS[kind];
  add(candleLayer, 'rect', { x: x - 1.1, y: priceY(+high), width: 2.3, height: priceY(+low) - priceY(+high), fill: color });
  add(candleLayer, 'rect', { x: x - 4, y: priceY(+top), width: 9, height: priceY(+bottom) - priceY(+top), fill: color });
});

const averageLayer = document.getElementById('averages');
line(averageLayer, ma5, priceY, '#222', 2.8);
line(averageLayer, ma10, priceY, '#f2b940', 2.8);
line(averageLayer, ma20, priceY, '#c71585', 2.8);

const volumes = [745,783,765,771,810,724,667,723,631,711,598,672,514,549,693,166,450,558,670,566,648,708,676,709,658,595,688,640,690,683,724,723,686,618,754,765,708,768,785,783,804,693,762,788,767,792,802,732,753,714,678,642,727,754,780,785,778,780,789,794,811,800,790,796,796,787,758,643,714,724,743,738,744,789,777,776,747,757,727,766,679,714,586,656,331,525,707,265];
const rising = 'rgggg rrgrg rgrgg rggrr ggrrr rrrgr rgrgr gggrg rgrrr grggg ggrrg rrggr rgrgg rrrgr rgggg rrrrr rgrrr grr';
const volumeMa1 = [748,754,759,760,777,772,752,741,714,693,669,668,628,609,605,517,474,483,507,480,577,631,655,664,681,669,665,661,654,661,687,694,702,687,702,708,708,723,756,763,771,768,765,767,763,758,782,777,772,761,739,705,702,705,718,740,767,778,783,788,793,795,797,797,797,793,788,755,739,724,716,713,733,749,760,766,766,771,760,756,736,728,696,681,593,564,560,500];
const volumeMa2 = [750,750,750,750,757,759,750,750,735,735,721,708,682,660,651,593,570,554,558,542,548,552,567,585,581,624,649,656,660,670,679,682,681,672,682,699,700,714,723,733,741,738,744,761,763,765,774,771,768,762,747,744,741,738,738,738,735,741,744,751,766,780,785,789,792,792,788,775,767,762,755,749,744,744,744,741,741,752,753,756,750,747,733,720,674,648,645,598];

const volumeLayer = document.getElementById('volumes');
const directions = rising.replace(/ /g, '');
volumes.forEach((v, i) => {
  const x = xAt(i);
  const y = volumeY(v);
  if (directions[i] === 'g') {
    add(volumeLayer, 'rect', { x: x - 5.3, y, width: 11, height: 1638 - y, fill: COLORS.g });
  } else {
    add(volumeLayer, 'rect', { x: x - 5, y: y + 1, width: 11, height: 1637 - y, fill: '#fff', stroke: '#bf3434', 'stroke-width': 2.3 });
  }
});
line(volumeLayer, volumeMa1, volumeY, '#ecc41c', 2.8);
line(volumeLayer, volumeMa2, volumeY, '#cb30cf', 2.8);

for (let i = 14; i < 88; i++) {
  const major = i % 30 === 27;
  add(volumeLayer, 'rect', {
    x: xAt(i) - (major ? 1 : .5), y: 1641, width: major ? 3 : 1.6, height: major ? 13.5 : 8,
    fill: major ? '#555' : '#888', opacity: Math.min(1, (i - 13) / 4)
  });
}
```
